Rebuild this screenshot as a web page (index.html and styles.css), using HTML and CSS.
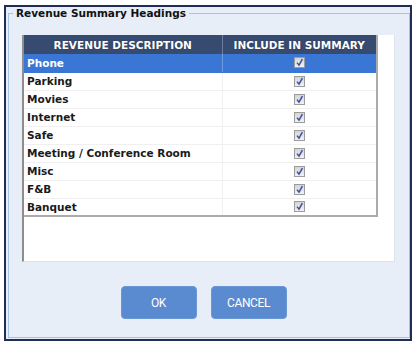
FILE: index.html
```html
<!DOCTYPE html>
<html>
  <head>
    <meta charset="utf-8" />
    <title>Revenue Summary Headings</title>
    <link rel="stylesheet" href="styles.css">
  </head>

  <body>
    <div class="page">
      <div class="dialog">
        <fieldset class="group">
          <legend>Revenue Summary Headings</legend>

          <!-- 一覧 -->
          <div class="grid">
            <table class="summary">
              <thead>
                <tr>
                  <th class="col-desc">REVENUE DESCRIPTION</th>
                  <th class="col-inc">INCLUDE IN SUMMARY</th>
                </tr>
              </thead>
              <tbody>
                <tr class="selected"><td>Phone</td><td class="check"><span class="box"></span></td></tr>
                <tr><td>Parking</td><td class="check"><span class="box"></span></td></tr>
                <tr><td>Movies</td><td class="check"><span class="box"></span></td></tr>
                <tr><td>Internet</td><td class="check"><span class="box"></span></td></tr>
                <tr><td>Safe</td><td class="check"><span class="box"></span></td></tr>
                <tr><td>Meeting / Conference Room</td><td class="check"><span class="box"></span></td></tr>
                <tr><td>Misc</td><td class="check"><span class="box"></span></td></tr>
                <tr><td>F&amp;B</td><td class="check"><span class="box"></span></td></tr>
                <tr><td>Banquet</td><td class="check"><span class="box"></span></td></tr>
              </tbody>
            </table>
          </div>

          <!-- ボタン -->
          <div class="actions">
            <button class="btn">OK</button>
            <button class="btn">CANCEL</button>
          </div>
        </fieldset>
      </div>
    </div>
  </body>
</html>
```

FILE: styles.css
```css
* {
  box-sizing: border-box;
}
body {
  margin: 0;
  background: #fff;
  font-family: "DejaVu Sans", Verdana, sans-serif;
}

.page {
  padding: 5px 3px 6px 4px;
}

.dialog {
  width: 408px;
  height: 336px;
  border: 2px solid #1f2c55;
  background-color: #e7eef8;
  padding: 0 0 0 2px;
}

/* グループ枠 */
.group {
  margin: 0;
  padding: 0 0 18px 0;
  width: 402px;
  border: 1px solid #a8c1e6;
}
.group legend {
  margin-left: 4px;
  padding: 0 3px;
  font-size: 10.5px;
  line-height: 12px;
  font-weight: bold;
  color: #111;
}

/* 一覧 */
.grid {
  margin: 16px 14px 0 13px;
  height: 227px;
  background: #fff;
  border-left: 2px solid #8e8e8e;
  border-right: 1px solid #dfe4ec;
  border-bottom: 1px solid #dfe4ec;
}
.summary {
  width: 354px;
  border-collapse: collapse;
  border-right: 2px solid #ababab;
  border-bottom: 2px solid #ababab;
  font-size: 10.5px;
  font-weight: bold;
}
.summary th {
  height: 19px;
  padding: 0;
  background-color: #374a70;
  color: #fff;
  text-align: center;
  text-shadow: 0 0 1px #1c2848;
}
.summary th.col-desc {
  width: 198px;
  border-right: 1px solid #6c7c9c;
}
.summary td {
  height: 18px;
  padding: 0 0 0 3px;
  color: #1a1a1a;
  border-bottom: 1px solid #f0f0f0;
  vertical-align: middle;
}
.summary td.check {
  padding: 0;
  text-align: center;
  border-left: 1px solid #f0f0f0;
}
.summary tr.selected td {
  background-color: #3a77d5;
  color: #fff;
  border-bottom-color: #3a77d5;
}
.summary tr.selected td.check {
  border-left-color: #6d9be0;
}

/* チェックボックス */
.box {
  display: inline-block;
  width: 11px;
  height: 11px;
  vertical-align: middle;
  margin-top: -2px;
  border: 1px solid #9c9c9c;
  background:
    url("data:image/svg+xml,%3Csvg xmlns='http://www.w3.org/2000/svg' width='9' height='9'%3E%3Cpath d='M2 4.6 L4 7.2 L7.4 1.2' fill='none' stroke='%23404fa6' stroke-width='1.5'/%3E%3C/svg%3E") no-repeat center,
    linear-gradient(#d4d4d4, #f2f2f2);
}

/* ボタン */
.actions {
  display: flex;
  justify-content: center;
  gap: 14px;
  margin-top: 24px;
  padding-right: 11px;
}
.btn {
  width: 76px;
  height: 33px;
  border: 1px solid #6a97d6;
  border-radius: 4px;
  background-color: #5a8bd0;
  color: #fff;
  font-family: Roboto, "DejaVu Sans", sans-serif;
  font-size: 12px;
  letter-spacing: -0.4px;
  cursor: pointer;
}
```
